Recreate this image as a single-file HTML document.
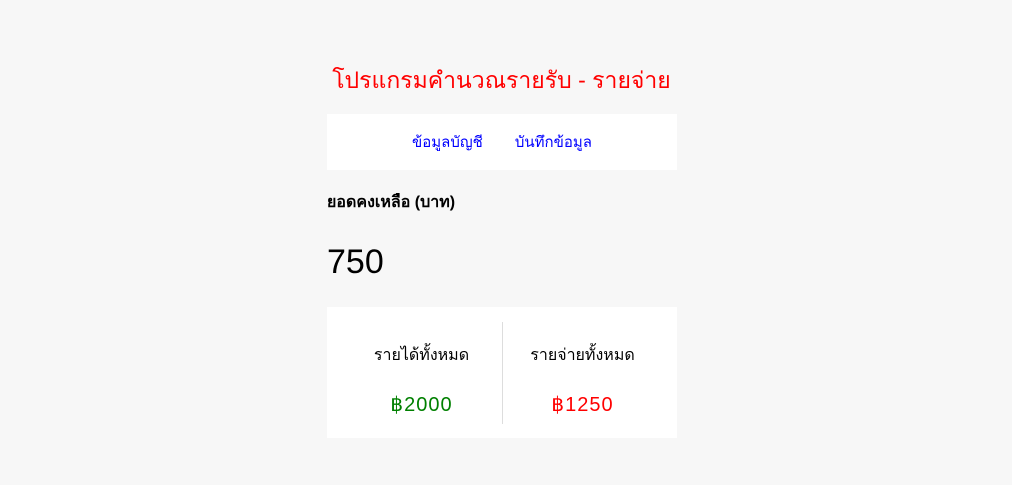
<!DOCTYPE html>
<html><head><meta charset="utf-8"><style>
body{margin:0;background:#f7f7f7;font-family:"Liberation Sans",sans-serif;width:1012px;height:485px;overflow:hidden}
.c{position:absolute;left:327px;width:350px}
h1{position:absolute;left:0;width:1003px;top:63px;margin:0;text-align:center;color:#f00;font-size:23px;font-weight:normal;line-height:34px}
.nav{top:114px;height:56px;background:#fff;display:flex;justify-content:center;align-items:center;gap:32px;font-size:15px;color:#00f}
.lbl{top:192px;font-size:16px;font-weight:bold;line-height:22px}
.big{top:241px;font-size:34px;line-height:42px}
.card{top:307px;height:131px;background:#fff}
.col{position:absolute;top:0;width:175px;text-align:center}
.col .t{position:absolute;top:38px;width:100%;font-size:16px;line-height:22px}
.col .v{position:absolute;top:85px;width:100%;font-size:20px;line-height:26px;letter-spacing:1px}
.div{position:absolute;left:175px;top:15px;height:102px;width:1px;background:#ddd}
</style></head><body>
<h1>โปรแกรมคำนวณรายรับ - รายจ่าย</h1>
<div class="c nav"><span>ข้อมูลบัญชี</span><span>บันทึกข้อมูล</span></div>
<div class="c lbl">ยอดคงเหลือ (บาท)</div>
<div class="c big">750</div>
<div class="c card">
<div class="col" style="left:7px"><div class="t">รายได้ทั้งหมด</div><div class="v" style="color:#008000">฿2000</div></div>
<div class="div"></div>
<div class="col" style="left:168px"><div class="t">รายจ่ายทั้งหมด</div><div class="v" style="color:#f00">฿1250</div></div>
</div>
</body></html>
